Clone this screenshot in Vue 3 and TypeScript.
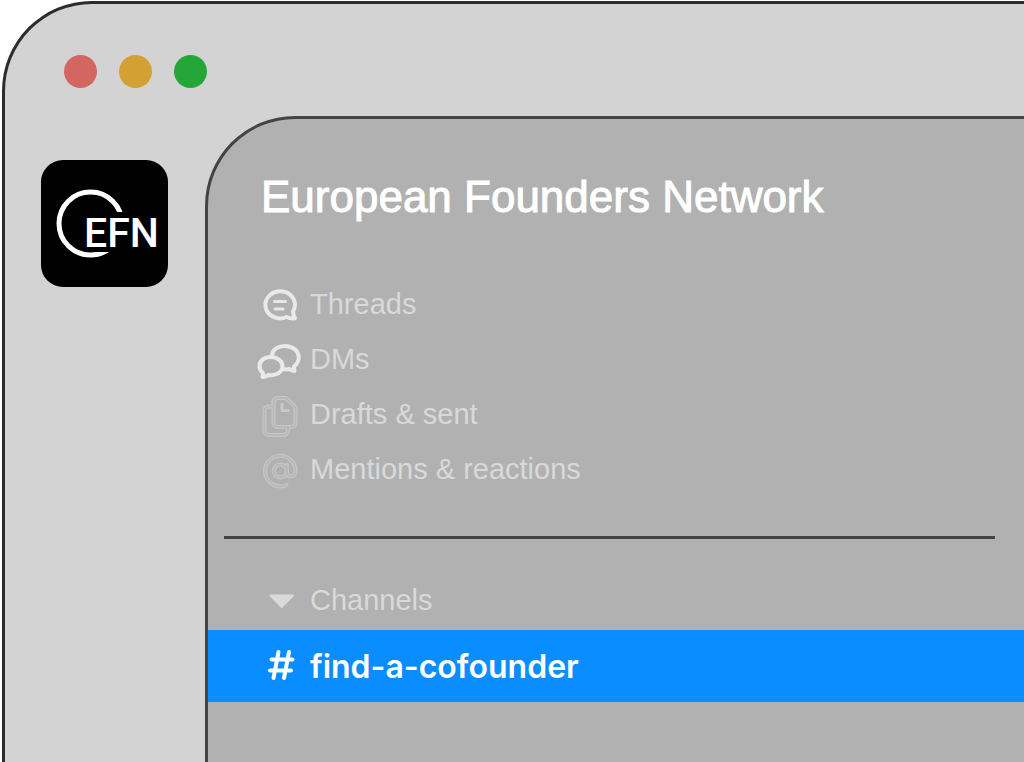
<script setup lang="ts">
interface NavItem {
  id: 'threads' | 'dms' | 'drafts' | 'mentions'
  label: string
}

const navItems: NavItem[] = [
  { id: 'threads', label: 'Threads' },
  { id: 'dms', label: 'DMs' },
  { id: 'drafts', label: 'Drafts & sent' },
  { id: 'mentions', label: 'Mentions & reactions' },
]
const channels: string[] = ['find-a-cofounder']
// Faint icons are a pale outline with a darker core drawn on top.
const layers = ['shell', 'core']
</script>

<template>
  <div class="window">
    <header class="titlebar">
      <button class="dot close" type="button" aria-label="Close"></button>
      <button class="dot minimize" type="button" aria-label="Minimize"></button>
      <button class="dot zoom" type="button" aria-label="Zoom"></button>
    </header>
    <div class="body">
      <aside class="rail">
        <a class="workspace" href="#" aria-label="EFN workspace">
          <svg viewBox="0 0 127 127">
            <circle class="ring" cx="49.500" cy="63.500" r="31.500" />
            <rect x="44" y="52" width="80" height="40" />
            <text x="43" y="87">EFN</text>
          </svg>
        </a>
      </aside>
      <main class="panel">
        <h1>European Founders Network</h1>
        <nav class="nav">
          <a v-for="item in navItems" :key="item.id" class="row" href="#">
            <svg v-if="item.id === 'threads'" class="icon bright" viewBox="0 0 44 44">
              <path d="M34 28.500A14.800 13.500 0 1 0 27.500 34Q31 35.700 36 35.300Q34 32 34 28.500Z" />
              <path class="lines" d="M15.500 18.500H26.500M16 26H24" />
            </svg>
            <svg v-else-if="item.id === 'dms'" class="icon bright" viewBox="0 0 44 44">
              <path d="M13 17C13.500 11.500 19 8 26 8C33.500 8 39.700 12.500 39.700 19.500C39.700 23.500 37.500 26.500 35 28.500C35 30.500 35.500 32 35.500 33C33.500 33 32 32 30.500 31C28 31.700 26 31.500 23.500 31" />
              <path d="M11.500 19C5 19 .5 23 .5 28C.5 31 2 33.500 4 35C4 37 3.500 38 3.500 39C6 39 8 38 9.500 37C17 38 23.500 34.500 23.500 28C23.500 23 18 19 11.500 19Z" />
            </svg>
            <svg v-else-if="item.id === 'drafts'" class="icon" viewBox="0 0 44 44">
              <g v-for="layer in layers" :key="layer" :class="layer">
                <path d="M14.500 13.500H10Q5.500 13.500 5.500 18V37.500Q5.500 42 10 42H24Q28.500 42 29 37.500V34" />
                <path d="M19 5H27L36.500 14V29.500Q36.500 34 32 34H19Q14.500 34 14.500 29.500V9.500Q14.500 5 19 5Z" />
              </g>
              <path class="hand" d="M23 11V17.500H29.500" />
            </svg>
            <svg v-else class="icon" viewBox="0 0 44 44">
              <g v-for="layer in layers" :key="layer" :class="layer">
                <circle cx="21.300" cy="23" r="6.500" />
                <path d="M27.800 17V24Q28 28.500 32 28.500Q36.600 28 36.600 23A15.300 15.300 0 1 0 27.500 37" />
              </g>
            </svg>
            <span>{{ item.label }}</span>
          </a>
        </nav>
        <hr />
        <section class="channels">
          <button class="row heading" type="button" aria-expanded="true">
            <svg class="icon" viewBox="0 0 44 44">
              <path class="caret" d="M11.500 17.500H34L22.700 29Z" />
            </svg>
            <span>Channels</span>
          </button>
          <a v-for="channel in channels" :key="channel" class="row channel" href="#" aria-current="page">
            <svg class="icon hash" viewBox="0 0 44 44">
              <path d="M19.500 8L14.500 34M30 8L25 34M12.500 15.500H33.500M11 26.500H32" />
            </svg>
            <span>{{ channel }}</span>
          </a>
        </section>
      </main>
    </div>
  </div>
</template>

<style>
body {
  margin: 0;
  background: #fff;
  overflow: hidden;
}
</style>

<style scoped>
.window {
  display: flex;
  flex-direction: column;
  box-sizing: border-box;
  min-height: calc(100vh - 1px);
  margin: 1px 0 0 2px;
  border: solid #2b2c2e;
  border-width: 3px 0 0 3px;
  border-top-left-radius: 90px;
  background: #d3d3d3;
  font-family: "Liberation Sans", Arial, sans-serif;
}
.titlebar {
  display: flex;
  gap: 22px;
  height: 61px;
  padding: 51px 0 0 59px;
}
.dot {
  width: 33px;
  height: 33px;
  padding: 0;
  border: 0;
  border-radius: 50%;
}
.close { background: #d36660; }
.minimize { background: #d3a032; }
.zoom { background: #25a639; }
.body {
  display: flex;
  flex: 1;
}
.rail {
  flex: none;
  width: 164px;
  padding: 44px 0 0 36px;
}
.workspace {
  display: block;
  width: 127px;
  height: 127px;
  border-radius: 22px;
  background: #000;
}
.workspace svg { display: block; }
.workspace text {
  fill: #fff;
  font-family: Roboto, sans-serif;
  font-size: 41px;
  font-weight: 500;
}
.ring {
  fill: none;
  stroke: #fff;
  stroke-width: 5;
}
.panel {
  flex: 1;
  min-width: 0;
  border: solid #444;
  border-width: 3px 0 0 3px;
  border-top-left-radius: 90px;
  background: #b1b1b1;
}
h1 {
  margin: 48px 0 0 53px;
  color: #fff;
  font-size: 44px;
  font-weight: 400;
  line-height: 60px;
  white-space: nowrap;
  -webkit-text-stroke: 1px #fff;
}
.nav { margin-top: 50px; }
.row {
  display: flex;
  align-items: center;
  gap: 7px;
  box-sizing: border-box;
  width: 100%;
  height: 55px;
  padding: 0 0 0 51px;
  border: 0;
  background: none;
  color: #d9d9d9;
  font-family: inherit;
  font-size: 29px;
  text-align: left;
  text-decoration: none;
  white-space: nowrap;
}
.icon {
  flex: none;
  width: 44px;
  height: 44px;
  overflow: visible;
  fill: none;
  stroke-linecap: round;
  stroke-linejoin: round;
}
.bright {
  stroke: #e9e9e9;
  stroke-width: 4;
}
.lines { stroke-width: 3; }
.shell {
  stroke: #c8c8c8;
  stroke-width: 4;
}
.core {
  stroke: #b9b9b9;
  stroke-width: 2;
}
.hand {
  stroke: #c8c8c8;
  stroke-width: 3;
}
.caret {
  fill: #d9d9d9;
  stroke: #d9d9d9;
  stroke-width: 2;
}
hr {
  height: 3px;
  margin: 39px 29px 0 16px;
  border: 0;
  background: #444;
}
.channels { margin-top: 31px; }
.heading { height: 60px; }
.channel {
  height: 72px;
  background: #098dff;
  color: #fff;
  font-family: Inter, "Liberation Sans", sans-serif;
  font-size: 32px;
  font-weight: 600;
}
.hash {
  stroke: #fff;
  stroke-width: 4;
}
</style>
